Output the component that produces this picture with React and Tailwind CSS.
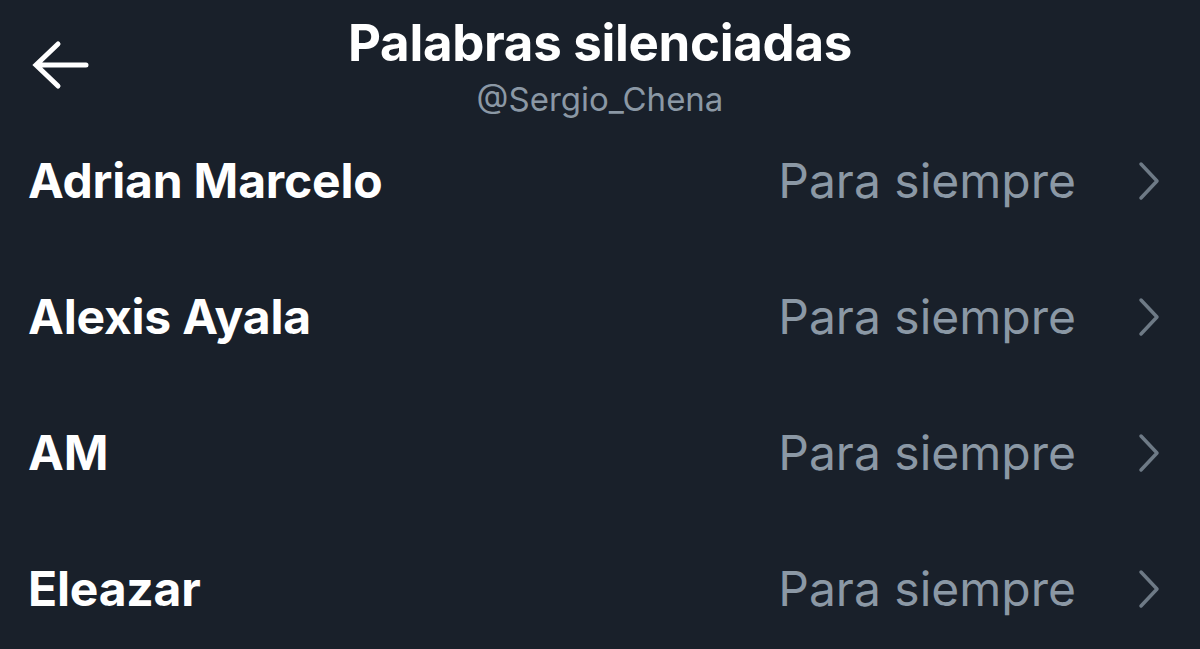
const rows = ['Adrian Marcelo', 'Alexis Ayala', 'AM', 'Eleazar']

export default function App() {
  return (
    <div className="w-[1200px] h-[649px] overflow-hidden bg-[#19202a] text-white" style={{ fontFamily: 'Inter, "Liberation Sans", sans-serif' }}>
      {/* header */}
      <div className="relative h-[113px] flex flex-col items-center pt-[13px]">
        <button className="absolute left-[29px] top-[38px] text-white">
          <svg width="62" height="54" viewBox="0 0 62 54" fill="none" stroke="currentColor" strokeWidth="5" strokeLinecap="round">
            <path d="M57 27H8M29 6L7 27l22 21" />
          </svg>
        </button>
        <h1 className="text-[51px] leading-[60px] font-bold tracking-[-0.3px]">Palabras silenciadas</h1>
        <p className="mt-[6px] text-[33px] leading-[40px] text-[#8b98a5]">@Sergio_Chena</p>
      </div>

      {/* muted words */}
      <div className="flex flex-col">
        {rows.map((r) => (
          <div key={r} className="h-[136px] flex items-center justify-between pl-[28px] pr-[40px]">
            <span className="text-[48px] font-bold tracking-[-0.2px]">{r}</span>
            <div className="flex items-center gap-[62px]">
              <span className="text-[48px] text-[#8b98a5]">Para siempre</span>
              <svg width="22" height="40" viewBox="0 0 22 40" fill="none" stroke="#6e7a86" strokeWidth="3.5" strokeLinecap="round" strokeLinejoin="round">
                <path d="M3 3l16 17L3 37" />
              </svg>
            </div>
          </div>
        ))}
      </div>
    </div>
  )
}
